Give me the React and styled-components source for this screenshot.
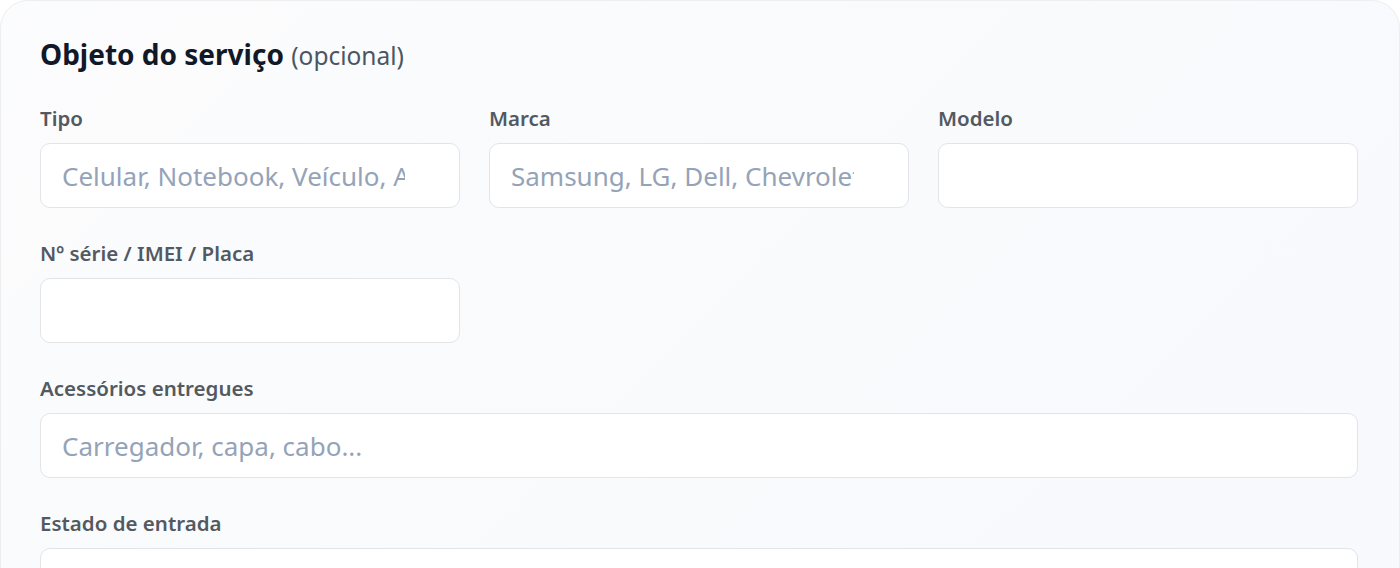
import React from "react";
import styled, { createGlobalStyle } from "styled-components";

const Global = createGlobalStyle`
  html, body {
    margin: 0;
    padding: 0;
    background: #ffffff;
    font-family: "Noto Sans", "Open Sans", sans-serif;
    overflow: hidden;
  }
`;

const Card = styled.section`
  box-sizing: border-box;
  width: 1400px;
  min-height: 640px;
  padding: 33px 41px 40px 39px;
  border: 1px solid #eceef2;
  border-radius: 28px;
  background: linear-gradient(135deg, #fcfcfd 0%, #f8fafc 55%, #f7f9fc 100%);
`;

const Title = styled.h2`
  margin: 0 0 30px 0;
  font-size: 28px;
  line-height: 40px;
  font-weight: 700;
  color: #111827;
`;

const Hint = styled.span`
  font-size: 24.5px;
  font-weight: 400;
  color: #4b5563;
`;

const Grid = styled.div`
  display: grid;
  grid-template-columns: repeat(3, 1fr);
  column-gap: 29px;
  row-gap: 33px;
`;

const Field = styled.label`
  display: flex;
  flex-direction: column;
  gap: 12px;
  grid-column: ${(props) => (props.wide ? "1 / -1" : "auto")};
`;

const Label = styled.span`
  font-size: 20.5px;
  line-height: 25px;
  font-weight: 600;
  color: #535961;
`;

const Input = styled.input`
  box-sizing: border-box;
  width: 100%;
  height: 65px;
  padding: 0 54px 0 21px;
  border: 1.5px solid #e2e4e8;
  border-radius: 10px;
  background: #ffffff;
  font-family: inherit;
  font-size: 26px;
  color: #111827;
  outline: none;
  &::placeholder {
    color: #94a3b8;
  }
`;

const fields = [
  { label: "Tipo", placeholder: "Celular, Notebook, Veículo, Acessório" },
  { label: "Marca", placeholder: "Samsung, LG, Dell, Chevrolet..." },
  { label: "Modelo", placeholder: "" },
  { label: "Nº série / IMEI / Placa", placeholder: "" },
  { label: "Acessórios entregues", placeholder: "Carregador, capa, cabo...", wide: true },
  { label: "Estado de entrada", placeholder: "", wide: true },
];

export default function App() {
  return (
    <>
      <Global />
      <Card>
        <Title>
          Objeto do serviço <Hint>(opcional)</Hint>
        </Title>
        <Grid>
          {fields.map((f, i) => (
            <React.Fragment key={i}>
              <Field wide={f.wide}>
                <Label>{f.label}</Label>
                <Input placeholder={f.placeholder} />
              </Field>
              {i === 3 && <div />}
              {i === 3 && <div />}
            </React.Fragment>
          ))}
        </Grid>
      </Card>
    </>
  );
}
